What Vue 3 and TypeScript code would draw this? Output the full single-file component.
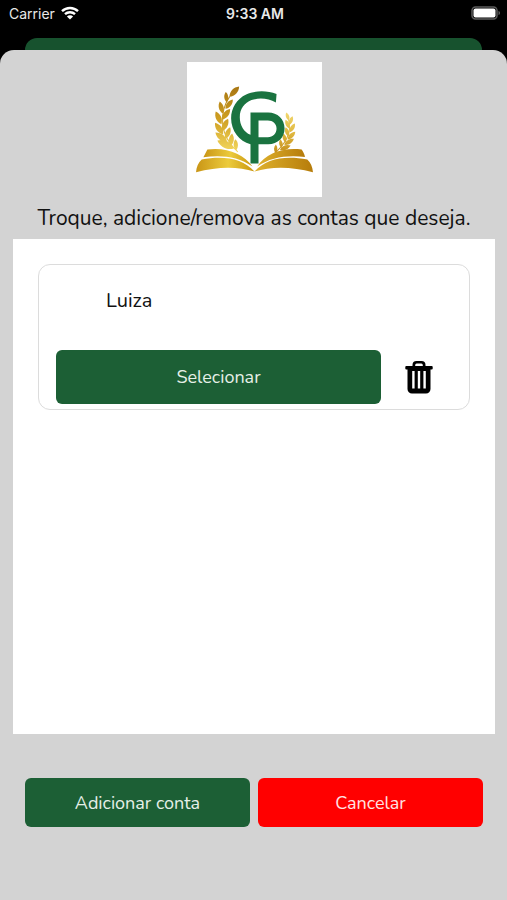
<script setup lang="ts">
import { ref } from 'vue'

interface Account {
  id: number
  name: string
}

/* A leaf runs from its base on the stalk (x, y) to its tip (tx, ty). */
interface Leaf {
  x: number
  y: number
  tx: number
  ty: number
}

const accounts = ref<Account[]>([{ id: 1, name: 'Luiza' }])

function removeAccount(id: number): void {
  accounts.value = accounts.value.filter((account) => account.id !== id)
}

const leftLeaves: Leaf[] = [
  { x: 147, y: 121, tx: 176, ty: 90 },
  { x: 139, y: 138, tx: 136, ty: 107 },
  { x: 135, y: 157, tx: 157, ty: 129 },
  { x: 127, y: 171, tx: 118, ty: 135 },
  { x: 124, y: 190, tx: 149, ty: 158 },
  { x: 123, y: 203, tx: 106, ty: 165 },
  { x: 125, y: 224, tx: 143, ty: 187 },
  { x: 128, y: 234, tx: 104, ty: 199 },
  { x: 135, y: 247, tx: 149, ty: 212 },
  { x: 140, y: 256, tx: 105, ty: 228 },
  { x: 150, y: 269, tx: 155, ty: 231 },
  { x: 160, y: 276, tx: 111, ty: 252 },
  { x: 167, y: 281, tx: 165, ty: 248 },
]

const rightLeaves: Leaf[] = [
  { x: 325, y: 192, tx: 317, ty: 168 },
  { x: 326, y: 205, tx: 336, ty: 179 },
  { x: 326, y: 216, tx: 315, ty: 190 },
  { x: 327, y: 227, tx: 343, ty: 201 },
  { x: 324, y: 240, tx: 315, ty: 212 },
  { x: 321, y: 249, tx: 344, ty: 226 },
  { x: 315, y: 258, tx: 309, ty: 231 },
  { x: 311, y: 265, tx: 340, ty: 247 },
  { x: 303, y: 274, tx: 299, ty: 248 },
  { x: 298, y: 280, tx: 330, ty: 267 },
  { x: 285, y: 290, tx: 286, ty: 264 },
]

function leafPath({ x, y, tx, ty }: Leaf): string {
  const dx = tx - x
  const dy = ty - y
  const nx = -dy * 0.26
  const ny = dx * 0.26
  const ax = x + dx * 0.3
  const ay = y + dy * 0.3
  const bx = x + dx * 0.7
  const by = y + dy * 0.7
  return (
    `M${x} ${y}C${ax + nx} ${ay + ny} ${bx + nx} ${by + ny} ${tx} ${ty}` +
    `C${bx - nx} ${by - ny} ${ax - nx} ${ay - ny} ${x} ${y}Z`
  )
}
</script>

<template>
  <div class="screen">
    <header class="status">
      <div class="carrier">
        <span>Carrier</span>
        <svg class="wifi" viewBox="0 0 18 14" aria-hidden="true">
          <path d="M1 5.2a11.5 11.5 0 0 1 16 0" />
          <path d="M4 8.2a7.2 7.2 0 0 1 10 0" />
          <path class="dot" d="M9 13.6 5.9 10.5a4.4 4.4 0 0 1 6.2 0z" />
        </svg>
      </div>
      <time class="clock">9:33 AM</time>
      <svg class="battery" viewBox="0 0 30 14" aria-hidden="true">
        <rect class="case" x="1" y="1" width="25" height="12" rx="3.5" />
        <rect class="charge" x="2.5" y="2.5" width="22" height="9" rx="2" />
        <path class="tip" d="M27.5 5v4c2-.6 2-3.4 0-4z" />
      </svg>
    </header>

    <div class="behind"></div>

    <main class="sheet">
      <svg class="logo" viewBox="20 17 404 404" role="img" aria-label="CP">
        <defs>
          <linearGradient id="gold-left" x1="0" y1="0" x2="1" y2="0">
            <stop offset="0" stop-color="#c99516" />
            <stop offset="0.55" stop-color="#eccb3c" />
            <stop offset="1" stop-color="#c9960f" />
          </linearGradient>
          <linearGradient id="gold-right" x1="0" y1="0" x2="1" y2="0">
            <stop offset="0" stop-color="#dfb22d" />
            <stop offset="1" stop-color="#b67c0b" />
          </linearGradient>
          <linearGradient id="wheat-left" gradientUnits="userSpaceOnUse" x1="0" y1="90" x2="0" y2="285">
            <stop offset="0" stop-color="#a87612" />
            <stop offset="0.5" stop-color="#cf9f22" />
            <stop offset="1" stop-color="#f2d65c" />
          </linearGradient>
          <linearGradient id="wheat-right" gradientUnits="userSpaceOnUse" x1="0" y1="168" x2="0" y2="290">
            <stop offset="0" stop-color="#f2d870" />
            <stop offset="0.5" stop-color="#e0b840" />
            <stop offset="1" stop-color="#c58f1c" />
          </linearGradient>
        </defs>
        <rect x="20" y="17" width="404" height="404" fill="#fff" />

        <g fill="url(#wheat-left)">
          <path v-for="(leaf, index) in leftLeaves" :key="index" :d="leafPath(leaf)" />
        </g>
        <path class="stalk" d="M148 120C117 165 114 235 172 286" stroke="url(#wheat-left)" />
        <g fill="url(#wheat-right)">
          <path v-for="(leaf, index) in rightLeaves" :key="index" :d="leafPath(leaf)" />
        </g>
        <path class="stalk" d="M324 190C335 228 318 262 272 299" stroke="url(#wheat-right)" />

        <path fill="url(#gold-left)" d="M81 279C137 271 190 292 216 330C173 300 125 295 69 302Z" />
        <path fill="url(#gold-left)" d="M64 309C128 296 187 305 222 345C171 329 111 330 47 347C48 331 54 318 64 309Z" />
        <path fill="url(#gold-right)" d="M363 279C307 272 256 290 230 330C270 302 318 295 373 301C372 294 368 286 363 279Z" />
        <path fill="url(#gold-right)" d="M380 309C316 296 257 305 222 345C273 329 333 330 397 347C396 331 390 318 380 309Z" />

        <path
          fill="#1a7340"
          fill-rule="evenodd"
          d="M288 113C259 101 224 102 197 114C169 127 152 155 152 185C152 222 176 254 210 263V321H234V263H263C292 263 312 243 312 216C312 188 291 168 263 168H210V235C190 226 178 206 178 182C178 158 192 139 213 131C237 123 264 126 286 138ZM234 192H262C277 192 288 202 288 216C288 231 277 242 262 242H234Z"
        />
      </svg>

      <h1 class="title">Troque, adicione/remova as contas que deseja.</h1>

      <section class="panel" aria-label="Contas">
        <article v-for="account in accounts" :key="account.id" class="card">
          <h2 class="name">{{ account.name }}</h2>
          <div class="row">
            <button type="button" class="btn select">Selecionar</button>
            <button type="button" class="trash" aria-label="Remover" @click="removeAccount(account.id)">
              <svg viewBox="0 0 28 33" aria-hidden="true">
                <path
                  fill-rule="evenodd"
                  d="M7.500 5V4a4 4 0 0 1 4-4h5a4 4 0 0 1 4 4v1h6.200a1 1 0 0 1 1 1v1.500a1 1 0 0 1-1 1h-1.200V28a4.500 4.500 0 0 1-4.500 4.500h-14A4.500 4.500 0 0 1 2.500 28V8.500H1.300a1 1 0 0 1-1-1V6a1 1 0 0 1 1-1zm2.700 0h7.600V4a1.500 1.500 0 0 0-1.500-1.500h-4.600A1.500 1.500 0 0 0 10.200 4zM7.200 10v17.500h2.400V10zm5.600 0v17.500h2.400V10zm5.600 0v17.500h2.400V10z"
                />
              </svg>
            </button>
          </div>
        </article>
      </section>

      <footer class="actions">
        <button type="button" class="btn">Adicionar conta</button>
        <button type="button" class="btn danger">Cancelar</button>
      </footer>
    </main>
  </div>
</template>

<style>
body {
  margin: 0;
  background: #000;
}
</style>

<style scoped>
.screen {
  display: flex;
  flex-direction: column;
  min-height: 100vh;
  background: #000;
  color: #111;
  font-family: Nunito, Lato, 'Open Sans', sans-serif;
}

.status {
  display: grid;
  grid-template-columns: 1fr auto 1fr;
  align-items: center;
  height: 26px;
  padding: 0 6px 0 9px;
  color: #e8e8e8;
  font-family: Inter, sans-serif;
  font-size: 14px;
}

.carrier {
  display: flex;
  align-items: center;
  gap: 6px;
}

.wifi {
  width: 18px;
  height: 14px;
  fill: none;
  stroke: #fff;
  stroke-width: 2.4;
}

.wifi .dot {
  fill: #fff;
  stroke: none;
}

.clock {
  font-weight: 600;
}

.battery {
  justify-self: end;
  width: 30px;
  height: 14px;
}

.case {
  fill: none;
  stroke: #5c5c5c;
  stroke-width: 1.5;
}

.charge {
  fill: #fff;
}

.tip {
  fill: #5c5c5c;
}

.behind {
  height: 12px;
  margin: 12px 25px 0;
  border-radius: 12px 12px 0 0;
  background: #17522e;
}

.sheet {
  display: flex;
  flex: 1;
  flex-direction: column;
  align-items: center;
  padding: 12px 12px 73px 13px;
  border-radius: 14px 14px 0 0;
  background: #d3d3d3;
}

.logo {
  width: 135px;
  height: 135px;
}

.stalk {
  fill: none;
  stroke-width: 3;
}

.title {
  margin: 6px 0;
  font-size: 21px;
  font-weight: 400;
  line-height: 30px;
  text-align: center;
}

.panel {
  flex: 1;
  align-self: stretch;
  padding: 25px;
  background: #fff;
}

.card {
  padding: 21px 17px 5px;
  border: 1px solid #dcdcdc;
  border-radius: 12px;
}

.name {
  margin: 0 0 34px 50px;
  font-size: 20px;
  font-weight: 400;
  line-height: 30px;
}

.row {
  display: flex;
  align-items: center;
  gap: 24px;
}

.btn {
  flex: 1;
  height: 49px;
  padding: 0;
  border: 0;
  border-radius: 6px;
  background: #1c5f35;
  color: #e6f0e8;
  font: inherit;
  font-size: 18px;
}

.select {
  height: 54px;
}

.trash {
  display: flex;
  margin-right: 19px;
  padding: 0;
  border: 0;
  background: none;
}

.trash svg {
  width: 28px;
  height: 33px;
}

.actions {
  display: flex;
  align-self: stretch;
  gap: 8px;
  margin: 44px 12px 0;
}

.danger {
  background: #f00;
  color: #ffe3e3;
}
</style>
